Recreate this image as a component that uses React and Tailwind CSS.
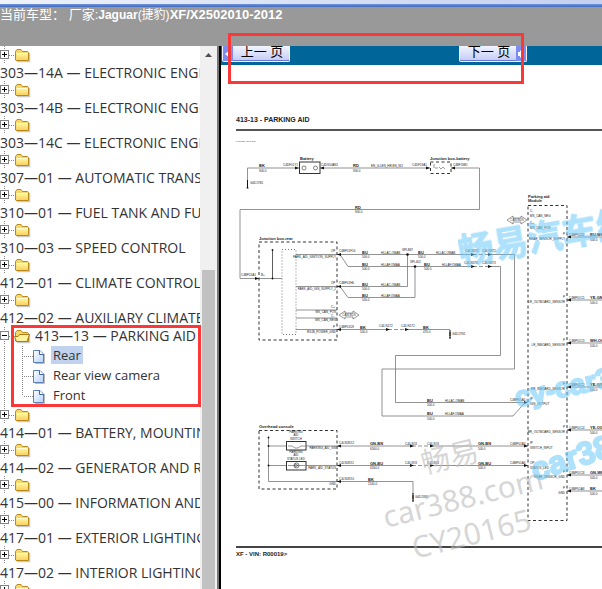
import clsx from 'clsx'

const sections = [
  { title: '303—14A — ELECTRONIC ENGINE CONTROLS' },
  { title: '303—14B — ELECTRONIC ENGINE CONTROLS' },
  { title: '303—14C — ELECTRONIC ENGINE CONTROLS' },
  { title: '307—01 — AUTOMATIC TRANSMISSION' },
  { title: '310—01 — FUEL TANK AND FUEL LINES' },
  { title: '310—03 — SPEED CONTROL' },
  { title: '412—01 — CLIMATE CONTROL' },
  { title: '412—02 — AUXILIARY CLIMATE CONTROL' },
  { title: '413—13 — PARKING AID', pages: ['Rear', 'Rear view camera', 'Front'] },
  { title: '414—01 — BATTERY, MOUNTING AND CABLES' },
  { title: '414—02 — GENERATOR AND REGULATOR' },
  { title: '415—00 — INFORMATION AND ENTERTAINMENT' },
  { title: '417—01 — EXTERIOR LIGHTING' },
  { title: '417—02 — INTERIOR LIGHTING' },
  { title: '418—00 — MODULE COMMUNICATIONS' },
]

// Toggle box, dotted connector and folder in one drawing
function FolderIcon({ open }) {
  return (
    <svg width="32" height="18" viewBox="0 0 32 18" className="shrink-0">
      <path d="M4.5 0V18M9 9.5H15" stroke="#888" strokeDasharray="1 1" />
      <rect x="0.5" y="4.5" width="8" height="8" fill="#fff" stroke="#848484" />
      <path d={open ? 'M2 8.5H7' : 'M2 8.5H7M4.5 6V11'} stroke="#000" />
      <path d="M17 15.5H29.5V7" fill="none" stroke="#c9c9c9" strokeWidth="1.5" />
      <path d="M15.5 14V5.5L17 3.5H21L22.5 5.5H27.5L28.5 6.5V14.5H16Z" fill="#f6d76a" stroke="#b88a1c" />
      {open ? (
        <path d="M14.5 9.5H18L19.5 7.5H29.5L27 14.5H16.5Z" fill="#fff3a0" stroke="#a87b14" />
      ) : (
        <>
          <path d="M16.5 7H28V14H16.5Z" fill="url(#folder)" />
          <path d="M16.5 7.5H27.5" stroke="#fffbd5" />
        </>
      )}
      <defs>
        <linearGradient id="folder" x1="0" y1="0" x2="0" y2="1">
          <stop offset="0" stopColor="#fffaa0" />
          <stop offset="1" stopColor="#fbd063" />
        </linearGradient>
      </defs>
    </svg>
  )
}

function PageIcon({ last }) {
  return (
    <svg width="51" height="20" viewBox="0 0 51 20" className="shrink-0">
      <path d="M4.5 0V20" stroke="#888" strokeDasharray="1 1" />
      <path d={last ? 'M22.5 0V10M24 10.5H33' : 'M22.5 0V20M24 10.5H33'} stroke="#888" strokeDasharray="1 1" />
      <path d="M35 17.5H44.5V8" fill="none" stroke="#bbb" />
      <path d="M33.5 4.5H40L43.5 8V16.5H33.5Z" fill="url(#page)" stroke="#5c80b5" />
      <path d="M39.5 4.5V8.5H43.5" fill="#fff" stroke="#3f66a3" />
      <defs>
        <linearGradient id="page" x1="0" y1="0" x2="1" y2="1">
          <stop offset="0" stopColor="#fff" />
          <stop offset="1" stopColor="#b5d3fa" />
        </linearGradient>
      </defs>
    </svg>
  )
}

function Section({ title, pages }) {
  if (!pages) {
    return (
      <li>
        <button type="button" className="block w-full text-left whitespace-nowrap">
          <FolderIcon />
          <span className="block h-[17px] leading-[17px]">{title}</span>
        </button>
      </li>
    )
  }

  return (
    <li>
      <button type="button" className="flex h-5 w-full items-center gap-[3px] whitespace-nowrap">
        <FolderIcon open />
        <span className="leading-5">{title}</span>
      </button>
      <ul>
        {pages.map((page, i) => (
          <li key={page} className="flex h-5 text-[13px]">
            <PageIcon last={i === pages.length - 1} />
            <a href="#" className={clsx('h-[18px] px-0.5 leading-[18px]', i === 0 && 'bg-[#c1d2ee]')}>
              {page}
            </a>
          </li>
        ))}
      </ul>
    </li>
  )
}

function Label({ x, y, children, size = 3, bold, end, middle }) {
  return (
    <text
      x={x}
      y={y}
      fontSize={size}
      fontWeight={bold ? 700 : 400}
      textAnchor={end ? 'end' : middle ? 'middle' : 'start'}
    >
      {children}
    </text>
  )
}

// Wire colour with its rule and the length under it
function Wire({ x, y, color, size = '500.0' }) {
  return (
    <g>
      <Label x={x} y={y - 1} size={4} bold>{color}</Label>
      <Label x={x} y={y + 3.5}>{size}</Label>
    </g>
  )
}

function Plug({ x, y, left }) {
  return <path d={left ? `M${x} ${y}l4 -1.5v3z` : `M${x} ${y}l-4 -1.5v3z`} fill="#111" />
}

function Ground({ x, y }) {
  return <path d={`M${x} ${y}v8M${x - 1} ${y + 8}h2M${x} ${y + 2}v4`} stroke="#111" strokeWidth="1" />
}

function BusArrow({ x, y }) {
  return (
    <g fill="#fff" stroke="#555" strokeWidth="0.6">
      <path d={`M${x} ${y}l6 -4v2h8v-2l6 4l-6 4v-2h-8v2z`} />
      <text x={x + 10} y={y + 1} fontSize="3" textAnchor="middle" fill="#333" stroke="none">CAN BUS</text>
    </g>
  )
}

const sensors = [
  { y: 237, name: 'REAR_SENSOR_SUPPLY', plug: 'C4MP01D2', color: 'BU-WH' },
  { y: 300, name: 'LR_OUTBOARD_SENSOR', plug: 'C4MP01C5', color: 'YE-GN' },
  { y: 343, name: 'LR_INBOARD_SENSOR', plug: 'C4MP01C3', color: 'WH-OG' },
  { y: 387, name: 'RR_INBOARD_SENSOR', plug: 'C4MP01C2', color: 'YE-GY' },
  { y: 430, name: 'RR_OUTBOARD_SENSOR', plug: 'C4MP01C4', color: 'YE-OG' },
  { y: 475, name: 'REAR_SENSOR_GND', plug: 'C4MP01C8', color: 'GN-WH' },
  { y: 491, name: 'GND', plug: 'C4MP01A8', color: 'BK' },
]

function WiringDiagram() {
  return (
    <svg
      width="366"
      height="415"
      viewBox="236 131 366 415"
      className="block max-w-none overflow-visible font-['Liberation_Sans',Arial,sans-serif]"
      fill="#222"
    >
      <Label x={236} y={142} size={2}>PARKING AID (1 of 2)</Label>

      {/* Wires */}
      <g fill="none" stroke="#777" strokeWidth="0.8">
        <path d="M247.5 182V168H299M320 168H430M451 168H479.5V209.5H240V278.5H282" />
        <path d="M272.5 250V278.5" stroke="#333" />
        <path d="M296 254.5H473M490 254.5H514.5V369H382V416H513L525 402.5" />
        <path d="M340 254.5L348 266.5H473M490 266.5H500.5V355.5H395.5V402.5H525" />
        <path d="M296 286.5H407.5V254.5M340 286.5L348 297.5H415V266.5" />
        <path d="M296 310H337M296 318H337M296 329.5H388M407 329.5H450" />
        <path d="M268.5 437V481.5H413V494M268.5 446H286M306 446H412M433 446H528" />
        <path d="M268.5 465.5H286M306 465.5H412M433 465.5H528" />
        <path d="M473 254.5H490M473 266.5H490M388 329.5H407M412 446H433M412 465.5H433" strokeDasharray="4 2" />
        {sensors.map((s) => (
          <path key={s.name} d={`M567 ${s.y}H620`} />
        ))}
      </g>

      {/* Component outlines */}
      <g fill="none" stroke="#333" strokeDasharray="3 2.5">
        <rect x="259" y="242" width="78" height="98" />
        <rect x="259" y="430.5" width="78" height="58.5" />
        <rect x="430.5" y="162" width="20.5" height="11.5" />
        <rect x="528" y="205.5" width="39" height="315" />
        <rect x="282" y="249.5" width="14" height="85" stroke="#777" strokeDasharray="1 2" />
      </g>
      <g fill="#fff" stroke="#333">
        <rect x="299.5" y="162" width="20.5" height="11.5" />
        <circle cx="304" cy="168" r="2" strokeWidth="0.6" />
        <circle cx="315.5" cy="168" r="2" strokeWidth="0.6" />
        <rect x="286.5" y="441.5" width="19.5" height="8.5" />
        <rect x="286.5" y="461.5" width="19.5" height="8.5" />
        <circle cx="296.5" cy="465.5" r="2.5" strokeWidth="0.6" />
        <path d="M288 446H292L295 448H298L301 446H305M288 465.5H305M295 463.5L298 465.5L295 467.5Z" strokeWidth="0.5" />
        <path d="M435 168H438M439 167l2 2l2 -2l2 2M434 164V168" strokeWidth="0.5" />
      </g>
      <g fill="#111">
        <circle cx="407.5" cy="254.5" r="1.3" />
        <circle cx="415" cy="266.5" r="1.3" />
        <circle cx="272.5" cy="250" r="0.9" />
        <circle cx="272.5" cy="278.5" r="0.9" />
        <circle cx="268.5" cy="437.5" r="0.9" />
        <circle cx="268.5" cy="446" r="0.9" />
        <circle cx="268.5" cy="465.5" r="0.9" />
      </g>

      {/* Battery feed */}
      <Label x={300} y={160} size={4} bold>Battery</Label>
      <Wire x={259} y={168} color="BK" size="900.0" />
      <Label x={283} y={166}>C4DF01Y1</Label>
      <Plug x={299} y={168} />
      <Plug x={320} y={168} left />
      <Label x={321} y={166}>C4DS50AN1</Label>
      <Wire x={353} y={168} color="RD" size="900.0" />
      <Label x={371} y={167}>EN_GJ,EN_HR,EN_W2</Label>
      <Label x={412} y={166}>C4DF19A1</Label>
      <Plug x={430} y={168} />
      <Label x={430} y={160} size={4} bold>Junction box-battery</Label>
      <Plug x={451} y={168} left />
      <Label x={453} y={166}>C4BF19B1</Label>
      <Ground x={247.5} y={180} />
      <Label x={250} y={184}>G4D17B1</Label>
      <Wire x={355} y={209.5} color="RD" size="900.0" />

      {/* Junction box rear */}
      <Label x={259} y={240} size={4} bold>Junction box-rear</Label>
      <Label x={241} y={276}>C4BP01A1</Label>
      <Label x={261} y={276}>B+</Label>
      <Plug x={259} y={278.5} />
      <Label x={331} y={252}>OP</Label>
      <Label x={336} y={258} end>PARK_AID_IGNITION_SUPPLY</Label>
      <Label x={331} y={284}>OP</Label>
      <Label x={336} y={290} end>PARK_AID_IGN_SUPPLY_2</Label>
      <Label x={331} y={308}>C+</Label>
      <Label x={336} y={313} end>MS_CAN_POS</Label>
      <Label x={331} y={317}>C-</Label>
      <Label x={336} y={321} end>MS_CAN_NEG</Label>
      <Label x={333} y={328}>P</Label>
      <Label x={336} y={333} end>RSJB_POWER_GND</Label>
      <BusArrow x={339} y={315} />
      <Plug x={337} y={254.5} left />
      <Plug x={337} y={286.5} left />
      <Plug x={337} y={329.5} left />
      <Label x={339} y={252}>C4BP01F16</Label>
      <Label x={339} y={284}>C4BP01H6</Label>
      <Label x={339} y={328}>C4BP01D9</Label>
      <Wire x={362} y={254.5} color="BU" />
      <Wire x={362} y={266.5} color="BU" />
      <Wire x={362} y={286.5} color="BU" />
      <Wire x={362} y={297.5} color="BU" />
      <Label x={381} y={253.5}>HLLAC.OMAB</Label>
      <Label x={381} y={265.5}>HLLAF.OMAA</Label>
      <Label x={381} y={285.5}>HLLAC.OMAB</Label>
      <Label x={381} y={296.5}>HLLAF.OMAA</Label>
      <Label x={402} y={251}>SPLB87</Label>
      <Label x={410} y={263}>SPL402</Label>
      <Wire x={418} y={254.5} color="BU" />
      <Wire x={424} y={266.5} color="BU" />
      <Label x={436} y={253.5}>HLLAC.OMAB</Label>
      <Label x={442} y={265.5}>HLLAF.OMAA</Label>
      <Label x={465} y={252}>C44-N372</Label>
      <Label x={482} y={252}>C44-N372</Label>
      <Label x={464} y={264}>C44-N373</Label>
      <Label x={482} y={264}>C44-N373</Label>
      <Plug x={475} y={254.5} />
      <Plug x={492} y={254.5} />
      <Plug x={475} y={266.5} />
      <Plug x={492} y={266.5} />
      <Wire x={360} y={329.5} color="BK" />
      <Label x={379} y={327}>C44-N172</Label>
      <Label x={401} y={327}>C44-N172</Label>
      <Plug x={390} y={329.5} />
      <Plug x={409} y={329.5} />
      <Wire x={423} y={329.5} color="BK" size="470.0" />
      <Ground x={450} y={330} />
      <Label x={452} y={335}>G4D17N1</Label>

      {/* Overhead console */}
      <Label x={259} y={428} size={4} bold>Overhead console</Label>
      <Label x={296} y={433} middle>PARKING</Label>
      <Label x={296} y={436} middle>AID</Label>
      <Label x={296} y={440} middle>SWITCH</Label>
      <Label x={296} y={453} middle>PARKING</Label>
      <Label x={296} y={456} middle>AID</Label>
      <Label x={296} y={460} middle>STATUS LED</Label>
      <Label x={336} y={448.5} end>PARKING_AID_SW</Label>
      <Label x={336} y={468.5} end>PARK_AID_STATUS</Label>
      <Label x={336} y={484.5} end>GND</Label>
      {[446, 465.5, 481.5].map((y) => (
        <Plug key={y} x={337} y={y} left />
      ))}
      <Label x={339} y={444}>C4LN28/12</Label>
      <Label x={339} y={463.5}>C4LN28/11</Label>
      <Label x={339} y={479.5}>C4LN28/10</Label>
      <Wire x={370} y={446} color="GN-BN" size="6160.0" />
      <Wire x={370} y={465.5} color="GN-BU" size="6160.0" />
      <Wire x={368} y={481.5} color="BK" size="2140.0" />
      {[446, 465.5].map((y) => (
        <g key={y}>
          <Label x={405} y={y - 1.5}>C44-N74</Label>
          <Label x={427} y={y - 1.5}>C44-N74</Label>
          <Plug x={414} y={y} />
          <Plug x={434} y={y} />
          <Label x={510} y={y - 1.5}>C4MP01A4</Label>
          <Plug x={528} y={y} />
        </g>
      ))}
      <Wire x={478} y={446} color="GN-BN" />
      <Wire x={478} y={465.5} color="GN-BU" />
      <Ground x={413} y={493} />
      <Label x={415} y={498}>G4D13N1</Label>

      {/* Parking aid module */}
      <Label x={528} y={198} size={4} bold>Parking aid</Label>
      <Label x={528} y={202} size={4} bold>Module</Label>
      <BusArrow x={507} y={220} />
      <Label x={530} y={212}>C-</Label>
      <Label x={530} y={217}>MS_CAN_NEG</Label>
      <Label x={530} y={224}>C+</Label>
      <Label x={530} y={229}>MS_CAN_POS</Label>
      <Label x={530} y={400}>IP</Label>
      <Label x={530} y={405}>IGN_OUTPUT</Label>
      <Label x={530} y={444}>IP</Label>
      <Label x={530} y={448.5}>SWITCH_INPUT</Label>
      <Label x={530} y={463.5}>OP</Label>
      <Label x={530} y={468.5}>STATUS_LED</Label>
      <Label x={510} y={400.5}>C4MP01A1</Label>
      <Plug x={528} y={402.5} />
      <Wire x={427} y={402.5} color="BU" />
      <Wire x={427} y={416} color="BU" />
      <Label x={445} y={401.5}>HLLAC.OMAB</Label>
      <Label x={445} y={415}>HLLAF.OMAA</Label>
      {sensors.map((s) => (
        <g key={s.name}>
          <Label x={565} y={s.y - 2} end>P</Label>
          <Label x={565} y={s.y + 3} end>{s.name}</Label>
          <Plug x={567} y={s.y} left />
          <Label x={569} y={s.y - 1.5}>{s.plug}</Label>
          <Wire x={590} y={s.y} color={s.color} />
        </g>
      ))}

      {/* Watermarks */}
      <g className="font-['Noto_Sans','Noto_Sans_CJK_SC',sans-serif]" fill="#bbb" fillOpacity="0.6">
        <text transform="translate(424 474) rotate(-14)" fontSize="29">畅易</text>
        <text transform="translate(386 528) rotate(-14)" fontSize="30">car388.com</text>
        <text transform="translate(415 559) rotate(-14)" fontSize="30">CY20165</text>
      </g>
      <g
        className="font-['Liberation_Sans','Noto_Sans_CJK_SC',sans-serif]"
        fill="#6cc8f8"
        stroke="#6cc8f8"
        strokeLinejoin="round"
        opacity="0.55"
        fontWeight="700"
      >
        <text transform="translate(461 265) rotate(-10)" fontSize="35" strokeWidth="1">畅易汽车维修</text>
        <text transform="translate(517 407) rotate(-12)" fontSize="28" strokeWidth="2">cy-car388.com</text>
        <text transform="translate(535 481) rotate(-18)" fontSize="32" strokeWidth="2">car388.com</text>
      </g>
    </svg>
  )
}

function PageButton({ children, next }) {
  return (
    <button
      type="button"
      className={clsx(
        'flex h-4 items-start overflow-hidden rounded-b-xs border border-t-0 border-[#f4f4ff] bg-linear-to-b from-[#f2f4ff] to-[#c3cbf5] text-[13px] text-black shadow-[inset_0_-1px_0_#6c78d8]',
        next && 'flex-row-reverse',
      )}
    >
      <span className="flex h-full w-[10px] items-center justify-center bg-[#7c8cf0]">
        <svg width="6" height="8" viewBox="0 0 6 8" fill="#fff">
          <path d={next ? 'M6 4L2 0V2H0V6H2V8Z' : 'M0 4L5 0V8Z'} />
        </svg>
      </span>
      <span className="w-14 pl-0.5 text-center leading-3">{children}</span>
    </button>
  )
}

function App() {
  return (
    <div className="relative flex h-screen flex-col overflow-hidden bg-white font-['Open_Sans','Noto_Sans_CJK_SC',sans-serif] text-[14px] text-[#333]">
      {/* Header */}
      <header className="h-[46px] shrink-0 bg-[#999]">
        <div className="h-1 bg-linear-to-r from-[#eef2fc] to-[#c3d0f0]" />
        <div className="h-[3px] bg-linear-to-b from-[#6f94dc] to-[#4169bd]" />
        <p className="h-4 text-[13px] leading-4 whitespace-pre text-white font-['Liberation_Sans','Noto_Sans_CJK_SC',sans-serif]">
          当前车型：{' '}厂家:
          <span className="text-[12px]"><b>Jaguar</b>(捷豹)</span>
          <b>XF/X2502010-2012</b>
        </p>
      </header>

      <div className="flex min-h-0 flex-1">
        {/* Section tree */}
        <nav className="w-[200px] shrink-0 overflow-hidden">
          <ul>
            {sections.map((section) => (
              <Section key={section.title} {...section} />
            ))}
          </ul>
        </nav>

        {/* Scrollbar */}
        <div className="flex w-[17px] shrink-0 flex-col items-center bg-[#f0f0f0]">
          <svg width="7" height="4" viewBox="0 0 7 4" className="mt-[7px] shrink-0" fill="#505050">
            <path d="M0 4L3.5 0L7 4Z" />
          </svg>
          <div className="mt-[213px] w-[13px] flex-1 bg-[#c1c1c1]" />
        </div>
        <div className="w-1 shrink-0 border-r-2 border-l-2 border-r-black border-l-[#777]" />

        {/* Document */}
        <main className="min-w-0 flex-1 overflow-hidden font-['Liberation_Sans',Arial,sans-serif]">
          <div className="flex h-[19px] items-start justify-between bg-[#006699] pr-[75px] pl-px font-['Liberation_Sans','Noto_Sans_CJK_SC',sans-serif]">
            <PageButton>上一 页</PageButton>
            <PageButton next>下一 页</PageButton>
          </div>
          <div className="pt-[50px] pl-[15px]">
            <h1 className="h-[14px] text-[7px] leading-[10px] font-bold text-[#222]">413-13 - PARKING AID</h1>
            <div className="h-[2px] bg-[#555]" />
            <WiringDiagram />
            <p className="border-t-2 border-[#444] pt-[1px] text-[6px] leading-[10px] font-bold text-[#222]">
              XF - VIN: R00019&gt;
            </p>
          </div>
        </main>
      </div>

      {/* Callouts */}
      <div className="pointer-events-none absolute top-[33px] left-[228px] h-[51px] w-[296px] border-3 border-[#fb3838]" />
      <div className="pointer-events-none absolute top-[325px] left-[11px] h-[82px] w-[190px] border-3 border-[#fb3838]" />
    </div>
  )
}

export default App
